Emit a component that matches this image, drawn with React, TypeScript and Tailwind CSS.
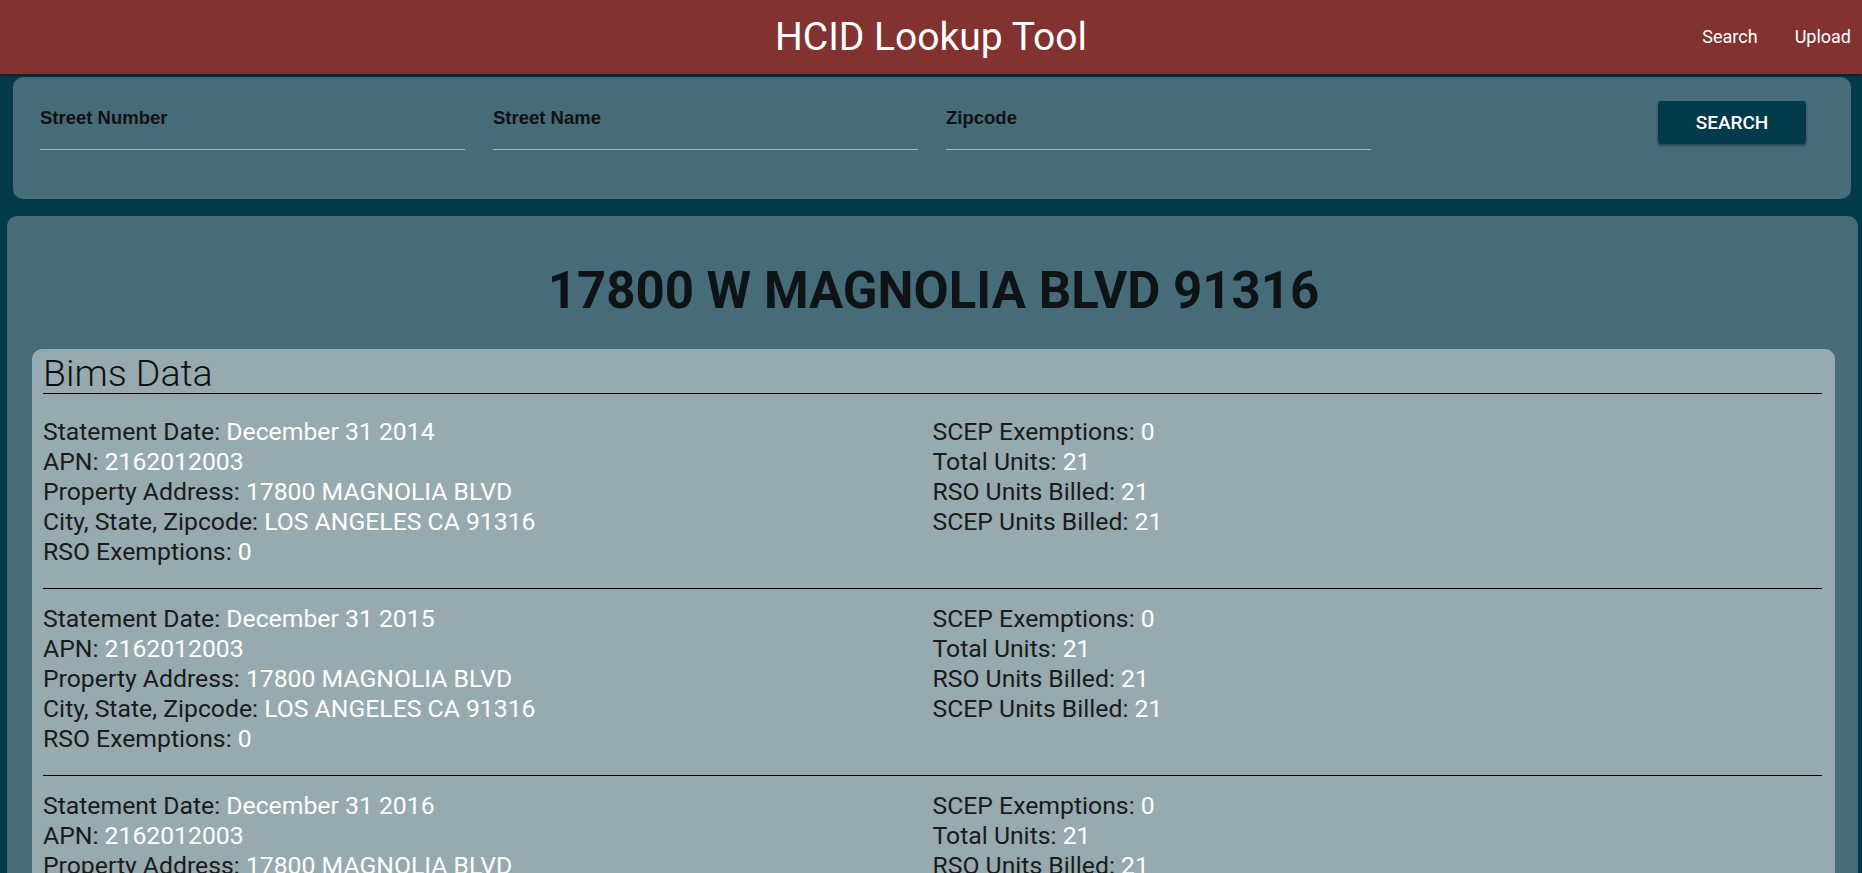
import React from "react"

const records = [2014, 2015, 2016, 2017, 2018, 2019].map((year) => ({
  left: [
    ["Statement Date", `December 31 ${year}`],
    ["APN", "2162012003"],
    ["Property Address", "17800 MAGNOLIA BLVD"],
    ["City, State, Zipcode", "LOS ANGELES CA 91316"],
    ["RSO Exemptions", "0"],
  ],
  right: [
    ["SCEP Exemptions", "0"],
    ["Total Units", "21"],
    ["RSO Units Billed", "21"],
    ["SCEP Units Billed", "21"],
  ],
}))

const Field = ({ label }: { label: string }) => (
  <div className="w-[425px] pt-[30px]">
    <div className="text-[18.5px] leading-[21px] font-bold text-[#111] font-['Liberation_Sans',Arial,sans-serif]">{label}</div>
    <div className="h-[22px] border-b border-[#a7b5ba]"></div>
  </div>
)

const Line = ({ label, value }: { label: string; value: string }) => (
  <div className="text-[24.75px] leading-[30px] whitespace-nowrap">
    <span className="text-[#1b1b1b]">{label}: </span>
    <span className="text-white">{value}</span>
  </div>
)

export default function App() {
  return (
    <div className="min-h-screen bg-[#023a4a] font-['Roboto',sans-serif] pb-10">
      <header className="relative z-10 h-[74px] bg-[#823331] grid grid-cols-[1fr_auto_1fr] items-center shadow-[0_2px_3px_rgba(0,0,0,0.45)]">
        <div></div>
        <h1 className="text-white text-[39px] leading-none">HCID Lookup Tool</h1>
        <nav className="flex justify-end gap-[37px] pr-[11px] pb-[2px] text-white text-[18px]">
          <a>Search</a>
          <a>Upload</a>
        </nav>
      </header>

      <div className="mt-[3px] ml-[13px] mr-[11px] h-[122px] rounded-[10px] bg-[#466c79] flex pl-[27px] pr-[45px]">
        <div className="flex gap-[28px]">
          <Field label="Street Number" />
          <Field label="Street Name" />
          <Field label="Zipcode" />
        </div>
        <button className="ml-auto mt-[24px] w-[148px] h-[43px] pt-[2px] rounded-[3px] bg-[#023a4a] text-white text-[19px] font-medium shadow-[0_2px_3px_rgba(0,0,0,0.35)]">
          SEARCH
        </button>
      </div>

      <div className="mt-[17px] ml-[7px] mr-[4px] rounded-[10px] bg-[#466c79] pt-[46px] pl-[25px] pr-[23px]">
        <h2 className="text-center text-[51px] leading-[58px] font-bold text-[#0e1416] mb-[29px]">
          17800 W MAGNOLIA BLVD 91316
        </h2>
        <div className="rounded-t-[10px] bg-[#96aaaf] pt-[5px] pl-[11px] pr-[13px] pb-6">
          <div className="text-[37.5px] leading-[39px] font-light text-[#111] border-b border-black mb-[8px]">Bims Data</div>
          {records.map((r, i) => (
            <div key={i} className="grid grid-cols-2 pt-[15px] pb-[21px] border-b border-black">
              <div>
                {r.left.map(([l, v]) => <Line key={l} label={l} value={v} />)}
              </div>
              <div>
                {r.right.map(([l, v]) => <Line key={l} label={l} value={v} />)}
              </div>
            </div>
          ))}
        </div>
      </div>
    </div>
  )
}
